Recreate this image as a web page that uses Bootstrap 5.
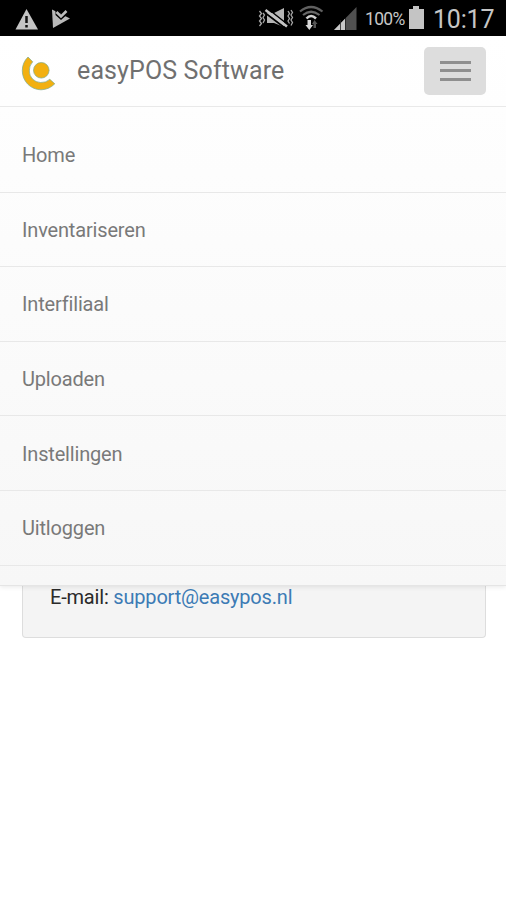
<!DOCTYPE html>
<html lang="nl">
<head>
<meta charset="utf-8">
<meta name="viewport" content="width=device-width, initial-scale=1">
<title>easyPOS Software</title>
<link href="https://cdn.jsdelivr.net/npm/bootstrap@5.3.0/dist/css/bootstrap.min.css" rel="stylesheet">
<script src="https://cdn.jsdelivr.net/npm/bootstrap@5.3.0/dist/js/bootstrap.bundle.min.js" defer></script>
<style>
body { font-family: Roboto, "Liberation Sans", sans-serif; height: 900px; overflow: hidden; background: #fff; }
.status-bar { height: 35.5px; background: #000; color: #c6c6c6; }
.status-bar svg { display: block; flex: none; }
.battery-text { font-size: 17.5px; line-height: 36px; width: 42px; letter-spacing: -.7px; margin-left: 7px; padding-top: 3px; white-space: nowrap; }
.clock { font-size: 25px; line-height: 36px; width: 64px; margin-left: 8px; padding-top: 4px; letter-spacing: -.2px; white-space: nowrap; }
.top-menu { height: 550px; padding: 0; background: linear-gradient(#fff, #f7f7f7); border-bottom: 1px solid #e5e5e5; box-shadow: 0 1px 5px rgba(0,0,0,.09); z-index: 2; }
.menu-head { height: 71.5px; padding: 0 20px 0 22px; border-bottom: 1.5px solid #e9e9e9; }
.navbar-brand { font-size: 25px; color: #707070; line-height: 30px; letter-spacing: .12px; margin: 0; padding: 0; }
.brand-label { padding-top: 1px; }
.navbar-toggler { width: 62px; height: 48px; background: #ddd; border: 0; border-radius: 5px; padding: 0; }
.bar { width: 31px; height: 3px; background: #8f8f8f; }
.bars { gap: 5.5px; }
.menu-links { padding-top: 11px; }
.menu-links .nav-link { height: 74.6px; padding: 1px 22px 0; font-size: 20px; letter-spacing: -.17px; color: #797979; border-bottom: 1.5px solid #e8e8e8; }
.contact-panel { height: 53.5px; margin: -1px 20.5px 0 22px; padding: 0 27px; background: #f4f4f4; border: 1.5px solid #ddd; border-top: 0; border-radius: 0 0 4px 4px; font-size: 20px; letter-spacing: -.19px; line-height: 24px; color: #2a2a2a; }
.contact-panel a { color: #3c7bb5; }
</style>
</head>
<body>
<header class="status-bar d-flex align-items-center">
  <svg width="258" height="36" viewBox="0 0 258 36">
    <path d="M26.500 9 38 29.500H15.500Z" fill="#c4c4c4"/>
    <path d="M26.500 16v7M26.500 25v2.500" stroke="#111" stroke-width="2.500"/>
    <path d="M52 9.500 70 18.500 53 28Z" fill="#b8b8b8"/>
    <path d="M55.500 10 61 14.500 66 8.500 69 13 61 20 55.500 15Z" fill="#000"/>
    <path d="M56.500 12 61 16.500 66.500 11" fill="none" stroke="#bdbdbd" stroke-width="2.600"/>
  </svg>
  <svg width="100" height="36" viewBox="258 0 100 36">
    <path d="M267 13h7l10-5v19l-10-4h-7z" fill="#b5b5b5"/>
    <path d="M264 12 285 28M267 8 287 24" stroke="#000" stroke-width="1.600"/>
    <path d="M265.500 10 287 26.500" stroke="#c4c4c4" stroke-width="2.500"/>
    <path d="M259.500 11l2 2.500-2 2.500 2 2.500-2 2.500 2 2.500-2 2.500M263 13l1.500 2-1.500 2.500 1.500 2.500-1.500 3M288 11l1.500 2.500-1.500 2.500 1.500 2.500-1.500 2.500 1.500 2.500M291 10l1.500 2.500-1.500 2.500 1.500 2.500-1.500 2.500 1.500 2.500-1.500 3" fill="none" stroke="#a8a8a8" stroke-width="1.300"/>
    <g fill="none" stroke-width="2.200"><path d="M300 11.500Q311 2.500 322.500 11.500" stroke="#606060"/><path d="M303 15Q311 8.500 319.500 15" stroke="#686868"/><path d="M306.500 18.500Q311 13.500 316 18.500" stroke="#d0d0d0" stroke-width="2.500"/></g>
    <path d="M307.500 20h3.500v5h2l-3.700 5-3.800-5h2z" fill="#d8d8d8"/>
    <path d="M313.500 28v-4h-1.500l2.500-4 3 4H316v4z" fill="#555"/>
    <path d="M356.500 7v23H334z" fill="#505050"/>
    <path d="M345 18.700V30H334z" fill="#c8c8c8"/>
    <path d="M340.500 20v10M345.500 18v12" stroke="#222" stroke-width=".8"/>
  </svg>
  <span class="battery-text">100%</span>
  <svg width="18" height="36" viewBox="407 0 18 36"><path d="M409 9h4V6h6v3h5v20h-15z" fill="#c4c4c4"/></svg>
  <span class="clock">10:17</span>
</header>

<nav class="navbar top-menu d-block position-relative">
  <div class="menu-head d-flex align-items-center justify-content-between">
    <a class="navbar-brand d-flex align-items-center" href="#">
      <svg class="overflow-visible" width="55" height="40" viewBox="22 51 55 40">
        <g stroke="#7ba98a" stroke-width=".7" fill="#f2b010"><circle cx="41.300" cy="70.300" r="7.800"/>
        <path d="M28 57A19 19 0 0 0 22.300 70.500A18.800 19 0 0 0 41 89.800A20 20 0 0 0 54.800 83.800L49.800 79.300A12.500 12.500 0 0 1 40.500 82.500A11.500 11.500 0 0 1 29.300 71A12.500 12.500 0 0 1 32.700 61.800Z"/></g>
      </svg>
      <span class="brand-label">easyPOS Software</span>
    </a>
    <button class="navbar-toggler d-flex align-items-center justify-content-center" type="button" aria-label="Menu">
      <span class="bars d-flex flex-column"><span class="bar"></span><span class="bar"></span><span class="bar"></span></span>
    </button>
  </div>
  <div class="menu-links nav flex-column flex-nowrap">
    <a class="nav-link d-flex align-items-center" href="#">Home</a>
    <a class="nav-link d-flex align-items-center" href="#">Inventariseren</a>
    <a class="nav-link d-flex align-items-center" href="#">Interfiliaal</a>
    <a class="nav-link d-flex align-items-center" href="#">Uploaden</a>
    <a class="nav-link d-flex align-items-center" href="#">Instellingen</a>
    <a class="nav-link d-flex align-items-center" href="#">Uitloggen</a>
  </div>
</nav>
<main class="contact-panel">E-mail: <a class="text-decoration-none" href="#">support@easypos.nl</a></main>
</body>
</html>
